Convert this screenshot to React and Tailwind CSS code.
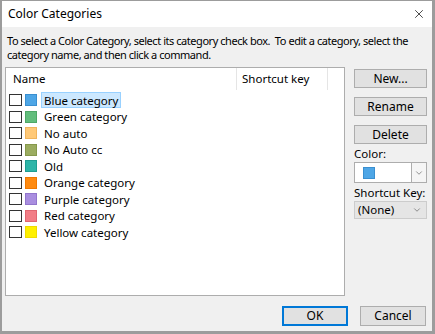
import { X, ChevronDown } from 'lucide-react';

const categories = [
  { name: 'Blue category', color: '#4ea6e6', border: '#3a8fd0', selected: true },
  { name: 'Green category', color: '#62bd7c', border: '#4ea766' },
  { name: 'No auto', color: '#ffc978', border: '#f0b45c' },
  { name: 'No Auto cc', color: '#9bac60', border: '#86984c' },
  { name: 'Old', color: '#2eb5a8', border: '#1f9d91' },
  { name: 'Orange category', color: '#ff8a10', border: '#f07800' },
  { name: 'Purple category', color: '#a98ee0', border: '#9276cc' },
  { name: 'Red category', color: '#f27d86', border: '#e06670' },
  { name: 'Yellow category', color: '#fff000', border: '#f0dc00' },
];

const Button = ({ children, primary }) => (
  <button
    className={
      primary
        ? 'h-[20px] w-[66px] bg-[#e1e1e1] border-2 border-[#0078d7] text-[12px] text-black leading-none'
        : 'h-[20px] w-[66px] bg-[#e1e1e1] border border-[#adadad] text-[12px] text-black leading-none'
    }
  >
    {children}
  </button>
);

const SideButton = ({ children }) => (
  <button className="h-[19px] w-[73px] bg-[#e1e1e1] border border-[#adadad] text-[12px] text-black leading-none">
    {children}
  </button>
);

export default function App() {
  return (
    <div
      className="w-[435px] h-[334px] bg-[#9c9c9c] pl-[2px] pt-[1px] pr-[3px] pb-[3px]"
      style={{ fontFamily: '"Noto Sans", "Open Sans", sans-serif' }}
    >
      <div className="w-full h-full flex flex-col bg-[#f0f0f0]">
        <div className="h-[26px] bg-white flex items-center justify-between pl-[6px] pr-[6px] shrink-0">
          <span className="text-[12px] text-black">Color Categories</span>
          <X className="w-[14px] h-[14px] text-[#333]" strokeWidth={1.5} />
        </div>

        <div className="flex-1 flex flex-col px-[3px]">
          <div className="pt-[7px] pl-[2px] text-[11px] leading-[14px] text-black tracking-[-0.45px] flex flex-col">
            <span className="whitespace-nowrap">
              To select a Color Category, select its category check box.&nbsp; To edit a category, select the
            </span>
            <span className="whitespace-nowrap">category name, and then click a command.</span>
          </div>

          <div className="flex mt-[5px] gap-[9px]">
            <div className="w-[340px] h-[229px] bg-white border border-[#adadad] flex flex-col">
              <div className="flex h-[22px] items-center text-[11.5px] text-black">
                <div className="w-[231px] pl-[7px] border-r border-[#e5e5e5] h-full flex items-center">Name</div>
                <div className="w-[91px] pl-[5px] border-r border-[#e5e5e5] h-full flex items-center">Shortcut key</div>
              </div>
              <div className="flex flex-col pt-[2px]">
                {categories.map((c) => (
                  <div key={c.name} className="h-[16.5px] flex items-center pl-[3px]">
                    <span className="w-[13px] h-[12px] border border-[#333] bg-white shrink-0" />
                    <span
                      className="w-[12px] h-[12px] ml-[3px] shrink-0 border"
                      style={{ backgroundColor: c.color, borderColor: c.border }}
                    />
                    <span
                      className={
                        c.selected
                          ? 'ml-[4px] px-[2px] h-[16px] flex items-center bg-[#cce8ff] border border-[#99d1ff] text-[11.5px] text-black'
                          : 'ml-[4px] px-[2px] h-[16px] flex items-center border border-transparent text-[11.5px] text-black'
                      }
                    >
                      {c.name}
                    </span>
                  </div>
                ))}
              </div>
            </div>

            <div className="w-[73px] flex flex-col pt-[2px]">
              <SideButton>New...</SideButton>
              <div className="h-[9px]" />
              <SideButton>Rename</SideButton>
              <div className="h-[9px]" />
              <SideButton>Delete</SideButton>
              <span className="text-[11.5px] text-black mt-[3px] leading-[14px]">Color:</span>
              <div className="h-[21px] bg-white border border-[#adadad] flex items-center mt-[1px]">
                <span className="w-[12px] h-[12px] ml-[8px] bg-[#4ea6e6] border border-[#3a8fd0]" />
                <div className="ml-auto h-full w-[15px] border-l border-[#adadad] bg-[#f5f5f5] flex items-center justify-center">
                  <ChevronDown className="w-[10px] h-[10px] text-[#555]" strokeWidth={1.5} />
                </div>
              </div>
              <span className="text-[11.5px] text-black mt-[3px] leading-[14px]">Shortcut Key:</span>
              <div className="h-[18px] bg-[#e5e5e5] border border-[#cccccc] flex items-center mt-[1px] pl-[3px] pr-[4px]">
                <span className="text-[11.5px] text-black">(None)</span>
                <ChevronDown className="ml-auto w-[10px] h-[10px] text-[#555]" strokeWidth={1.5} />
              </div>
            </div>
          </div>

          <div className="flex justify-end gap-[12px] mt-[10px] pr-[3px]">
            <Button primary>OK</Button>
            <Button>Cancel</Button>
          </div>
        </div>
      </div>
    </div>
  );
}
